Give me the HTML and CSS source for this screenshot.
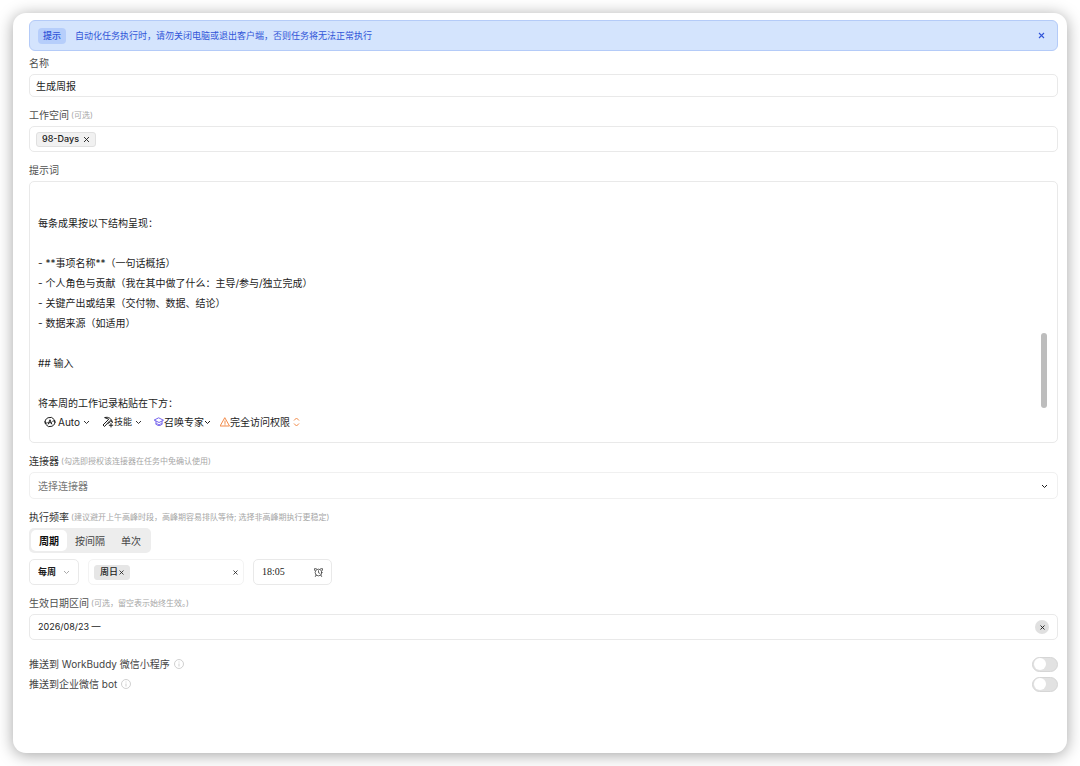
FILE: index.html
```html
<!DOCTYPE html>
<html lang="zh-CN">
<head>
<meta charset="utf-8">
<meta name="viewport" content="width=device-width, initial-scale=1">
<title>自动化任务</title>
<link rel="stylesheet" href="styles.css">
</head>
<body>
<main class="panel">
  <div class="banner" role="status">
    <span class="banner-badge">提示</span>
    <span class="banner-text">自动化任务执行时，请勿关闭电脑或退出客户端，否则任务将无法正常执行</span>
    <button class="icon-btn banner-close" type="button" aria-label="关闭提示">
      <svg width="7" height="7" viewBox="0 0 7 7"><path d="M1 1l5 5M6 1L1 6" stroke="currentColor" stroke-width="1.1"/></svg>
    </button>
  </div>

  <form class="form">
    <div class="field">
      <label class="label" for="name">名称</label>
      <input class="box name-input" id="name" type="text" value="生成周报">
    </div>

    <div class="field">
      <div class="label">工作空间<span class="hint">(可选)</span></div>
      <div class="box workspace">
        <span class="chip">98-Days
          <button class="icon-btn" type="button" aria-label="移除 98-Days">
            <svg width="7" height="7" viewBox="0 0 7 7"><path d="M1 1l5 5M6 1L1 6" stroke="currentColor" stroke-width=".9"/></svg>
          </button>
        </span>
      </div>
    </div>

    <div class="field">
      <label class="label" for="prompt">提示词</label>
      <div class="box editor">
        <textarea class="prompt" id="prompt" rows="11">

每条成果按以下结构呈现：

- **事项名称**（一句话概括）
- 个人角色与贡献（我在其中做了什么：主导/参与/独立完成）
- 关键产出或结果（交付物、数据、结论）
- 数据来源（如适用）

## 输入

将本周的工作记录粘贴在下方：</textarea>
        <div class="scroll-thumb"></div>
        <div class="tools">
          <button class="tool tool-auto" type="button">
            <svg width="12" height="12" viewBox="0 0 24 24" fill="none" stroke="currentColor" stroke-width="2" stroke-linecap="round" stroke-linejoin="round"><path d="M2.500 15A10 10 0 0 1 20.500 7M21.500 9A10 10 0 0 1 3.500 17M2 11l1 4 3.500-1.500M22 13l-1-4-3.500 1.500"/><path d="M8.500 16L12 7.500l3.500 8.500M10 13.500h4"/></svg>
            <span>Auto</span>
            <svg class="chev" width="7" height="5" viewBox="0 0 7 5"><path d="M1 1l2.500 2.500L6 1" fill="none" stroke="currentColor" stroke-width=".9"/></svg>
          </button>
          <button class="tool tool-skill" type="button">
            <svg width="12" height="12" viewBox="0 0 24 24" fill="none" stroke="currentColor" stroke-width="2" stroke-linejoin="round" stroke-linecap="round"><path d="M6 3c7-2 13 2 15 10l-5-4L5 21l-3-3L13 7z"/><path d="M12 15l4-3M18 15v7M14.500 18.500h7"/></svg>
            <span class="small">技能</span>
            <svg class="chev" width="7" height="5" viewBox="0 0 7 5"><path d="M1 1l2.500 2.500L6 1" fill="none" stroke="currentColor" stroke-width=".9"/></svg>
          </button>
          <button class="tool tool-expert" type="button">
            <svg class="violet" width="10" height="10" viewBox="0 0 20 20" fill="none" stroke="currentColor" stroke-width="2" stroke-linejoin="round" stroke-linecap="round"><path d="M10 2l9 4.500-9 4.500-9-4.500zM4 8.500V14c2 4 10 4 12 0V8.500M4 14h3l3 2 3-2h3"/></svg>
            <span>召唤专家</span>
            <svg width="7" height="5" viewBox="0 0 7 5"><path d="M1 1l2.500 2.500L6 1" fill="none" stroke="currentColor"/></svg>
          </button>
          <button class="tool tool-access" type="button">
            <svg class="orange" width="10" height="10" viewBox="0 0 20 20" fill="none" stroke="currentColor" stroke-width="2" stroke-linejoin="round" stroke-linecap="round"><path d="M10 2l9 16H1zM10 8v5M10 15.500v.500"/></svg>
            <span>完全访问权限</span>
            <svg class="orange chev" width="7" height="10" viewBox="0 0 7 10"><path d="M1 3.500L3.500 1 6 3.500M1 6.500L3.500 9 6 6.500" fill="none" stroke="currentColor"/></svg>
          </button>
        </div>
      </div>
    </div>

    <div class="field">
      <label class="label strong" for="connector">连接器<span class="hint">(勾选即授权该连接器在任务中免确认使用)</span></label>
      <div class="select-wrap">
        <select class="box connector" id="connector"><option>选择连接器</option></select>
        <svg class="select-arrow" width="7" height="5" viewBox="0 0 7 5"><path d="M1 1l2.500 2.500L6 1" fill="none" stroke="currentColor"/></svg>
      </div>
    </div>

    <div class="field">
      <div class="label strong">执行频率<span class="hint">(建议避开上午高峰时段，高峰期容易排队等待; 选择非高峰期执行更稳定)</span></div>
      <div class="segments" role="radiogroup" aria-label="执行频率">
        <label class="segment"><input type="radio" name="mode" checked><span>周期</span></label>
        <label class="segment"><input type="radio" name="mode"><span>按间隔</span></label>
        <label class="segment"><input type="radio" name="mode"><span>单次</span></label>
      </div>
      <div class="schedule">
        <div class="select-wrap">
          <select class="box period" aria-label="周期"><option>每周</option></select>
          <svg class="select-arrow pale" width="7" height="5" viewBox="0 0 7 5"><path d="M1 1l2.500 2.500L6 1" fill="none" stroke="currentColor"/></svg>
        </div>
        <div class="box days">
          <span class="chip day">周日<button class="icon-btn" type="button" aria-label="移除周日">
            <svg width="5" height="5" viewBox="0 0 5 5"><path d="M.5.5l4 4M4.500.5l-4 4" stroke="currentColor" stroke-width=".8"/></svg>
          </button></span>
          <button class="icon-btn" type="button" aria-label="清空">
            <svg width="5" height="5" viewBox="0 0 5 5"><path d="M.5.5l4 4M4.500.5l-4 4" stroke="currentColor" stroke-width=".8"/></svg>
          </button>
        </div>
        <div class="box time">
          <input class="time-input" type="text" value="18:05" aria-label="执行时间">
          <button class="icon-btn" type="button" aria-label="选择时间">
            <svg width="9" height="9" viewBox="0 0 20 20" fill="none" stroke="currentColor" stroke-width="1.500" stroke-linecap="round"><circle cx="10" cy="10" r="7.500"/><path d="M10 6v4.500l3 1.500M1 5V1.500h4M19 5V1.500h-4M4.500 16L3 19M15.500 16l1.500 3"/></svg>
          </button>
        </div>
      </div>
    </div>

    <div class="field">
      <label class="label" for="range">生效日期区间<span class="hint">(可选，留空表示始终生效。)</span></label>
      <div class="box range">
        <input class="range-input" id="range" type="text" value="2026/08/23 —">
        <button class="icon-btn clear" type="button" aria-label="清除日期">
          <svg width="5" height="5" viewBox="0 0 5 5"><path d="M.5.5l4 4M4.500.5l-4 4" stroke="currentColor" stroke-width=".9"/></svg>
        </button>
      </div>
    </div>

    <div class="pushes">
      <div class="push">
        <label for="push-mini">推送到 WorkBuddy 微信小程序</label>
        <svg class="info" width="10" height="10" viewBox="0 0 20 20" fill="none" stroke="currentColor" stroke-width="1.400"><circle cx="10" cy="10" r="9"/><path d="M10 5v2M10 9v6"/></svg>
        <input class="toggle" id="push-mini" type="checkbox" role="switch">
      </div>
      <div class="push">
        <label for="push-bot">推送到企业微信 bot</label>
        <svg class="info" width="10" height="10" viewBox="0 0 20 20" fill="none" stroke="currentColor" stroke-width="1.400"><circle cx="10" cy="10" r="9"/><path d="M10 5v2M10 9v6"/></svg>
        <input class="toggle" id="push-bot" type="checkbox" role="switch">
      </div>
    </div>
  </form>
</main>
</body>
</html>
```
FILE: styles.css
```css
* { box-sizing: border-box; }

body {
  margin: 0;
  padding: 13px;
  background: #fff;
  color: #1c1c1c;
  font: 10px/16px Inter, "Noto Sans CJK SC", sans-serif;
}

button, input, select, textarea { margin: 0; color: inherit; font: inherit; }
svg { display: block; flex: none; }

.panel {
  min-height: calc(100vh - 26px);
  padding: 7px 9px 16px 16px;
  border-radius: 13px;
  background: #fff;
  box-shadow: 0 2px 16px rgba(0, 0, 0, .36);
}

.icon-btn {
  display: flex;
  align-items: center;
  justify-content: center;
  padding: 0;
  border: 0;
  background: none;
}

.banner {
  display: flex;
  align-items: center;
  min-height: 31px;
  margin-bottom: 4px;
  padding: 0 12px 0 8px;
  border: 1px solid #b4cbf8;
  border-radius: 6px;
  background: #d4e4fd;
  color: #3155d8;
  font-size: 9px;
}
.banner-badge {
  margin-right: 9px;
  padding: 0 5px;
  border-radius: 4px;
  background: #b6cefb;
  font-weight: 500;
}
.banner-close { margin-left: auto; }

.form { display: flex; flex-direction: column; gap: 10px; }
.field { display: flex; flex-direction: column; gap: 3px; min-width: 0; }
.label { display: flex; align-items: center; min-height: 16px; color: #505050; }
.label.strong { color: #333; }
.hint { margin-left: 2px; color: #a6a6a6; font-size: 8px; }

.box {
  width: 100%;
  border: 1px solid #e9e9e9;
  border-radius: 5px;
  background: #fff;
}
.name-input { height: 23px; padding: 0 6px; }

.workspace { display: flex; align-items: center; height: 26px; padding: 0 6px; }
.chip {
  display: flex;
  align-items: center;
  gap: 4px;
  height: 15px;
  padding: 0 5px;
  border: 1px solid #e0e0e0;
  border-radius: 3px;
  background: #f1f1f1;
  font-size: 9px;
  font-weight: 500;
}

.editor { position: relative; }
.prompt {
  display: block;
  width: 100%;
  padding: 11px 24px 0 8px;
  border: 0;
  outline: 0;
  overflow: hidden;
  resize: none;
  background: none;
  line-height: 20px;
}
.scroll-thumb {
  position: absolute;
  top: 58%;
  right: 10px;
  width: 6px;
  height: 75px;
  border-radius: 3px;
  background: #bdbdbd;
}
.tools { display: flex; align-items: center; gap: 9px; padding: 0 14px 11px; }
.tool {
  display: flex;
  align-items: center;
  height: 18px;
  padding: 0;
  border: 0;
  background: none;
}
.tool .chev { margin-left: 3px; }
.tool-auto, .tool-skill { margin-right: 3px; }
.tool-auto span { margin-left: 2px; }
.small { font-size: 9px; }
.violet { color: #7462ec; }
.orange { color: #f28a48; }

.select-wrap { position: relative; }
.select-wrap select { appearance: none; }
.select-arrow {
  position: absolute;
  top: 50%;
  right: 10px;
  margin-top: -2px;
  pointer-events: none;
}
.pale { color: #aaa; right: 9px; }
.connector { display: block; height: 27px; padding: 0 8px; border-color: #f0f0f0; color: #777; }

.segments {
  display: flex;
  align-self: flex-start;
  height: 25px;
  padding: 2px;
  border-radius: 5px;
  background: #ededed;
}
.segment { position: relative; display: flex; color: #444; }
.segment input { position: absolute; inset: 0; margin: 0; opacity: 0; }
.segment span { display: flex; align-items: center; padding: 0 8px; border-radius: 5px; }
.segment input:checked + span { background: #fff; color: #111; font-weight: 700; }

.schedule { display: flex; gap: 9px; margin-top: 3px; }
.period { display: block; width: 50px; height: 26px; padding: 0 8px; font-size: 9px; font-weight: 700; }
.days {
  display: flex;
  align-items: center;
  justify-content: space-between;
  width: 156px;
  padding: 0 5px;
  border-color: #f3f3f3;
}
.day { gap: 1px; border-color: #e6e6e6; background: #e6e6e6; }
.time { display: flex; align-items: center; width: 79px; padding: 0 8px; }
.time-input {
  flex: 1;
  min-width: 0;
  padding: 0;
  border: 0;
  font-family: "Liberation Serif", serif;
}

.range { display: flex; align-items: center; height: 26px; padding: 0 8px; }
.range-input { flex: 1; min-width: 0; padding: 0; border: 0; font-size: 9px; }
.clear { width: 14px; height: 14px; border-radius: 50%; background: #e0e0e0; }

.pushes { margin-top: 4px; color: #444; }
.push { display: flex; align-items: center; height: 20px; }
.info { margin-left: 4px; color: #bbb; }
.toggle {
  appearance: none;
  display: flex;
  align-items: center;
  width: 26px;
  height: 15px;
  margin-left: auto;
  padding: 0 1px;
  border: 1px solid #d6d6d6;
  border-radius: 8px;
  background: #e2e2e2;
}
.toggle::before {
  content: "";
  width: 12px;
  height: 12px;
  border-radius: 50%;
  background: #fff;
}
.toggle:checked { background: #3155d8; }
.toggle:checked::before { margin-left: auto; }
```
